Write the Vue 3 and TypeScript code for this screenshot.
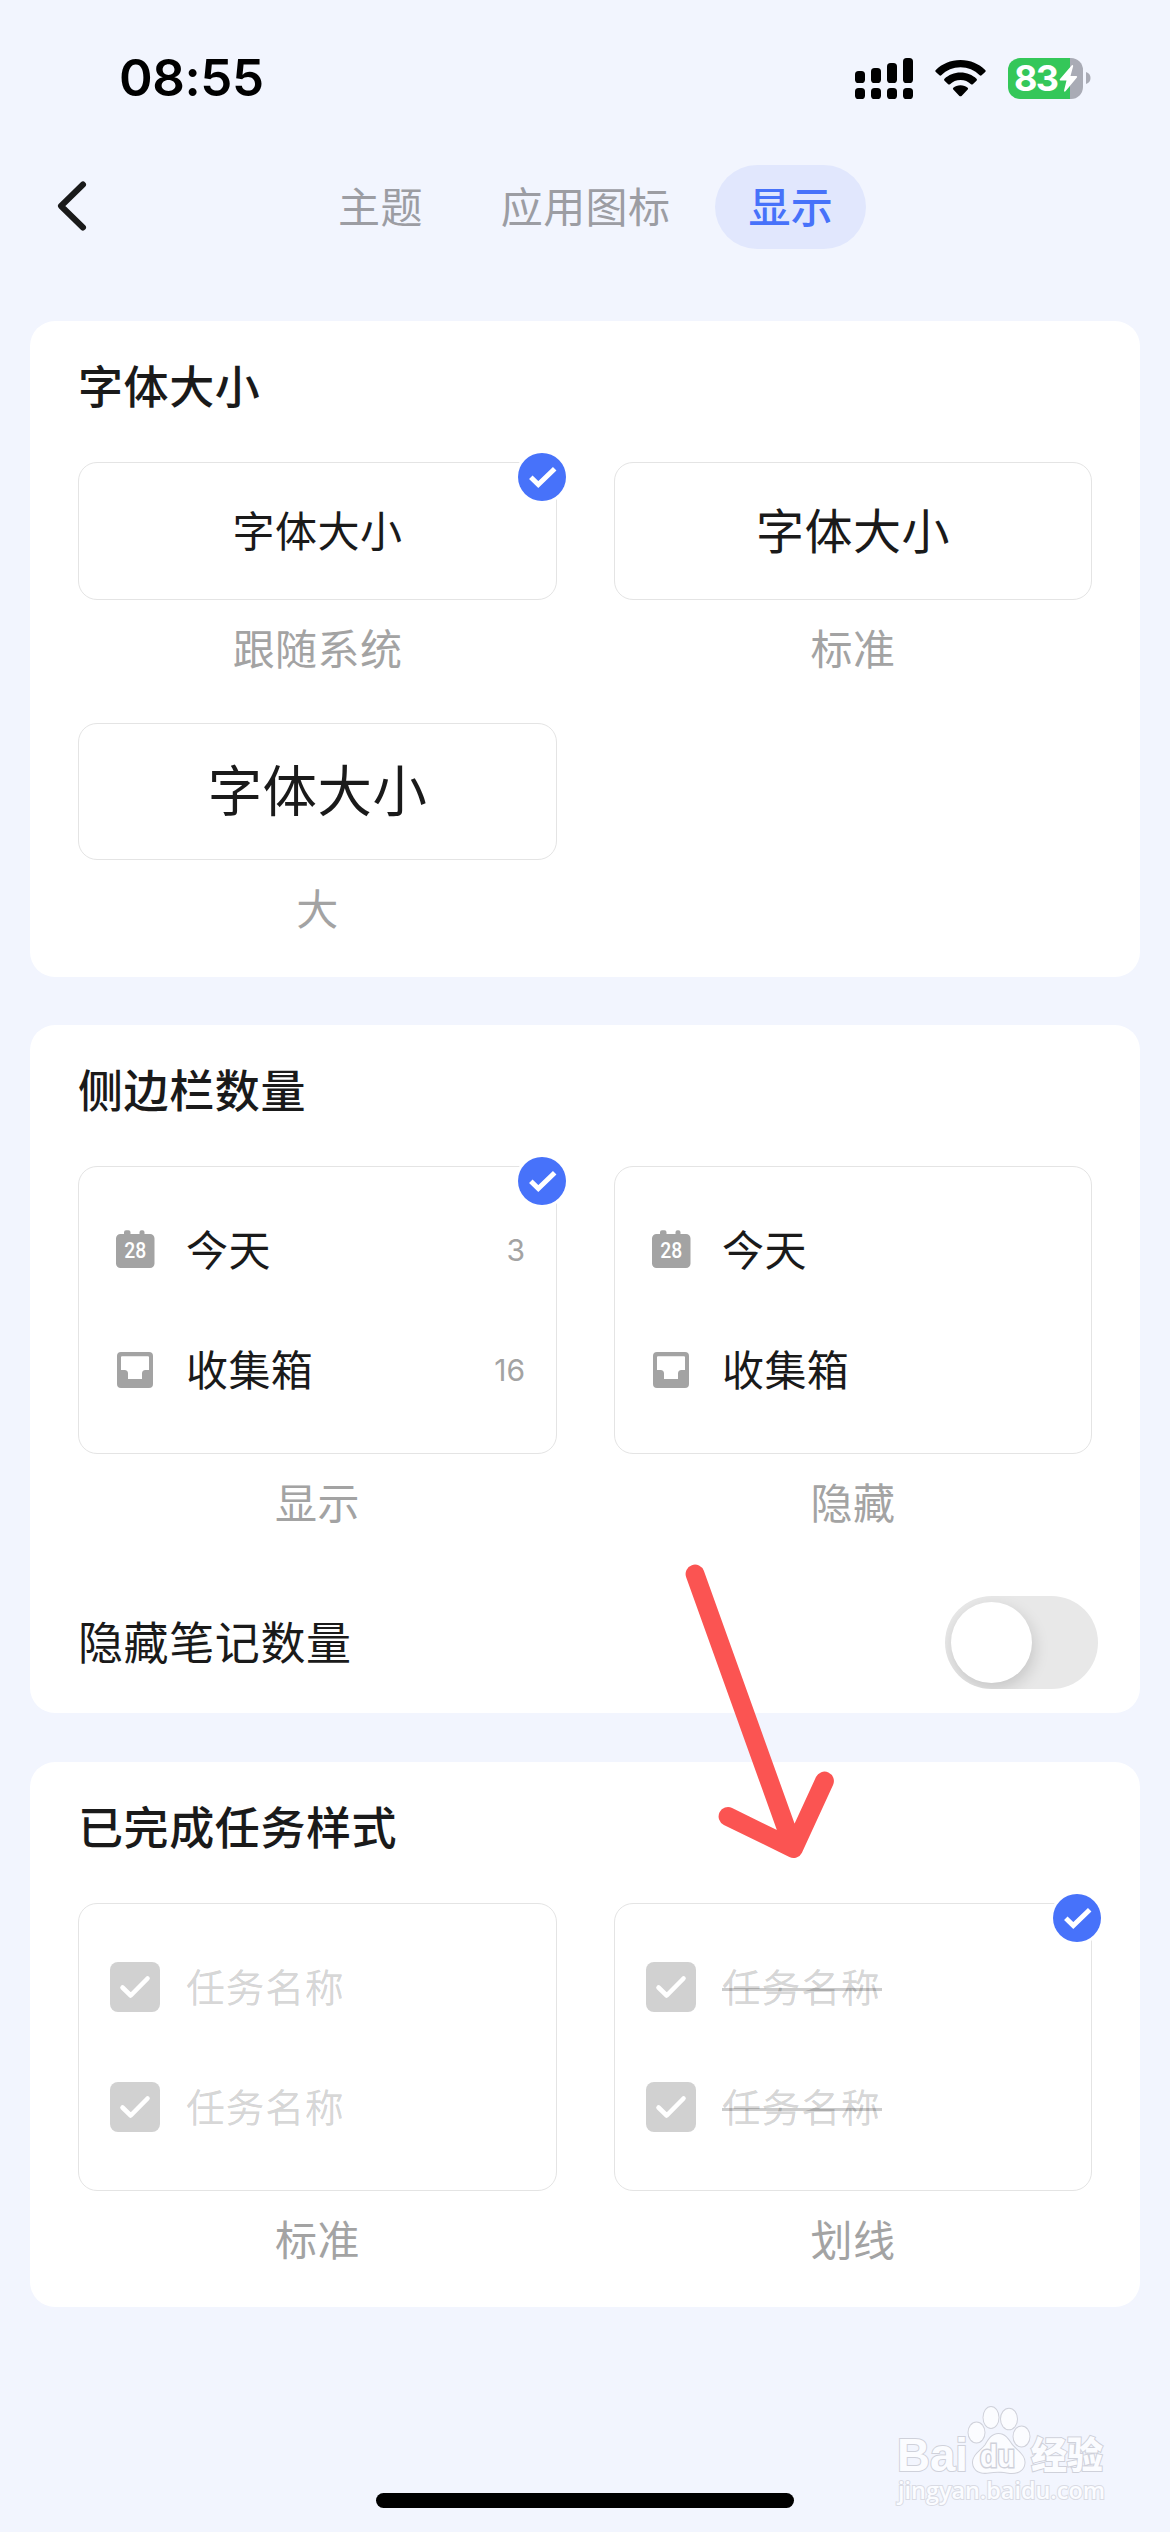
<script setup lang="ts">
interface SizeOption {
  label: string
  size: number
  selected: boolean
}

interface ListOption {
  label: string
  showCount: boolean
  selected: boolean
}

interface TaskOption {
  label: string
  struck: boolean
  selected: boolean
}

const tabs: { label: string; active: boolean }[] = [
  { label: '主题', active: false },
  { label: '应用图标', active: false },
  { label: '显示', active: true },
]

const sizes: SizeOption[] = [
  { label: '跟随系统', size: 42, selected: true },
  { label: '标准', size: 48, selected: false },
  { label: '大', size: 54.4, selected: false },
]

const lists: ListOption[] = [
  { label: '显示', showCount: true, selected: true },
  { label: '隐藏', showCount: false, selected: false },
]

const taskStyles: TaskOption[] = [
  { label: '标准', struck: false, selected: false },
  { label: '划线', struck: true, selected: true },
]

const tasks: string[] = ['任务名称', '任务名称']
const signalTops: number[] = [13, 10, 5, 0]
</script>

<template>
  <div class="screen">
    <header class="status">
      <span class="time">08:55</span>
      <div class="indicators">
        <svg class="signal" width="58" height="41" viewBox="0 0 58 41">
          <g v-for="(top, i) in signalTops" :key="i">
            <rect :x="i * 16" :y="top" width="10" :height="25 - top" rx="3.6" />
            <rect :x="i * 16" y="30" width="10" height="11" rx="3.6" />
          </g>
        </svg>
        <svg class="wifi" width="51" height="38" viewBox="0 0 51 38">
          <path d="M25.500 1C35.500 1 44 5 50.200 10.900Q51.200 11.900 50.200 12.900L46.600 16.300Q45.700 17.100 44.700 16.200C39.500 11.300 32.800 8.300 25.500 8.300S11.500 11.300 6.300 16.200Q5.300 17.100 4.400 16.300L.8 12.900Q-.2 11.900 .8 10.900C7 5 15.500 1 25.500 1Z" />
          <path d="M25.500 13.600C31.800 13.600 37.400 16 41.500 19.800Q42.500 20.800 41.500 21.800L37.800 25.200Q36.900 26 36 25.200C33.200 22.600 29.600 21 25.500 21S17.800 22.600 15 25.200Q14.100 26 13.200 25.200L9.500 21.800Q8.500 20.800 9.500 19.800C13.600 16 19.200 13.600 25.500 13.600Z" />
          <path d="M25.500 26.200C28.400 26.200 30.900 27.200 32.700 28.800Q33.600 29.700 32.700 30.600L26.600 36.900Q25.500 37.800 24.400 36.900L18.300 30.600Q17.400 29.700 18.300 28.800C20.100 27.200 22.600 26.200 25.500 26.200Z" />
        </svg>
        <div class="battery">
          <span class="level">83</span>
          <svg class="bolt" width="19" height="29" viewBox="0 0 19 29">
            <path d="M12.800 1.200L.8 15.200Q.2 16.400 1.500 16.500H7.500L5 26.800Q5.200 28.400 6.500 27.300L17.900 13.500Q18.700 12.200 17.300 12.100H11.500L14.200 2Q13.900 .3 12.800 1.200Z" fill="#fff" />
          </svg>
        </div>
        <svg class="cap" width="5" height="12" viewBox="0 0 5 12">
          <path d="M0 0C6 1.500 6 10.500 0 12Z" fill="#a9abb5" />
        </svg>
      </div>
    </header>

    <nav class="nav">
      <svg class="back" width="34" height="54" viewBox="0 0 34 54">
        <path d="M29 4.500L7 26L29 47.500" fill="none" stroke="#1a1a1a" stroke-width="6" stroke-linecap="round" stroke-linejoin="round" />
      </svg>
      <div class="tabs">
        <span v-for="tab in tabs" :key="tab.label" class="tab" :class="{ active: tab.active }">{{ tab.label }}</span>
      </div>
    </nav>

    <main class="cards">
      <section class="card">
        <h2 class="title">字体大小</h2>
        <div class="grid">
          <div v-for="opt in sizes" :key="opt.label" class="option">
            <div class="box sample">
              <span :style="{ fontSize: opt.size + 'px' }">字体大小</span>
              <svg v-if="opt.selected" class="badge" width="54" height="54" viewBox="-3 -3 54 54">
                <circle cx="24" cy="24" r="27" fill="#fff" />
                <circle cx="24" cy="24" r="24" fill="#4772fa" />
                <path d="M12.800 24.300L20.300 31.600L36.700 15.800" fill="none" stroke="#fff" stroke-width="5" />
              </svg>
            </div>
            <p class="caption">{{ opt.label }}</p>
          </div>
        </div>
      </section>

      <section class="card with-switch">
        <h2 class="title">侧边栏数量</h2>
        <div class="grid">
          <div v-for="opt in lists" :key="opt.label" class="option">
            <div class="box rows">
              <div class="row">
                <svg class="icon" width="50" height="50" viewBox="0 0 50 50">
                  <path d="M17.500 5.200h1a2 2 0 0 1 2 2V9h9V7.200a2 2 0 0 1 2-2h1a2 2 0 0 1 2 2V9H40a4.500 4.500 0 0 1 4.500 4.500v25A4.500 4.500 0 0 1 40 43H10.500A4.500 4.500 0 0 1 6 38.500v-25A4.500 4.500 0 0 1 10.500 9H14V7.200a2 2 0 0 1 2-2Z" fill="#a3a3a3" />
                  <text x="25.200" y="33" class="day" text-anchor="middle" textLength="22" lengthAdjust="spacingAndGlyphs">28</text>
                </svg>
                <span class="name">今天</span>
                <span v-if="opt.showCount" class="count">3</span>
              </div>
              <div class="row">
                <svg class="icon" width="50" height="50" viewBox="0 0 50 50">
                  <path fill-rule="evenodd" d="M11 7H39a4 4 0 0 1 4 4V39a4 4 0 0 1-4 4H11a4 4 0 0 1-4-4V11a4 4 0 0 1 4-4ZM11 12.300V25h3.500a3.500 3.500 0 0 1 3.500 3.500V34h14V28.500a3.500 3.500 0 0 1 3.500-3.500H39V12.300a1 1 0 0 0-1-1H12a1 1 0 0 0-1 1Z" fill="#a3a3a3" />
                </svg>
                <span class="name">收集箱</span>
                <span v-if="opt.showCount" class="count">16</span>
              </div>
              <svg v-if="opt.selected" class="badge" width="54" height="54" viewBox="-3 -3 54 54">
                <circle cx="24" cy="24" r="27" fill="#fff" />
                <circle cx="24" cy="24" r="24" fill="#4772fa" />
                <path d="M12.800 24.300L20.300 31.600L36.700 15.800" fill="none" stroke="#fff" stroke-width="5" />
              </svg>
            </div>
            <p class="caption">{{ opt.label }}</p>
          </div>
        </div>
        <div class="setting">
          <span class="setting-name">隐藏笔记数量</span>
          <span class="switch"><span class="knob"></span></span>
        </div>
      </section>

      <section class="card completed">
        <h2 class="title">已完成任务样式</h2>
        <div class="grid">
          <div v-for="opt in taskStyles" :key="opt.label" class="option">
            <div class="box rows">
              <div v-for="(task, i) in tasks" :key="i" class="row">
                <svg class="icon" width="50" height="50" viewBox="0 0 50 50">
                  <rect width="50" height="50" rx="8" fill="#d1d1d1" />
                  <path d="M12.500 25.500L20.700 33.500L37.500 16.500" fill="none" stroke="#fff" stroke-width="4.600" stroke-linecap="round" stroke-linejoin="round" />
                </svg>
                <span class="task" :class="{ struck: opt.struck }">{{ task }}</span>
              </div>
              <svg v-if="opt.selected" class="badge" width="54" height="54" viewBox="-3 -3 54 54">
                <circle cx="24" cy="24" r="27" fill="#fff" />
                <circle cx="24" cy="24" r="24" fill="#4772fa" />
                <path d="M12.800 24.300L20.300 31.600L36.700 15.800" fill="none" stroke="#fff" stroke-width="5" />
              </svg>
            </div>
            <p class="caption">{{ opt.label }}</p>
          </div>
        </div>
      </section>
    </main>

    <svg class="arrow" width="160" height="310" viewBox="680 1555 160 310">
      <path d="M695 1574L793.500 1848.500M728 1816.500L793.500 1848.500L824.500 1781" fill="none" stroke="#fb5452" stroke-width="18.800" stroke-linecap="round" stroke-linejoin="round" />
    </svg>

    <svg class="watermark" width="285" height="132" viewBox="885 2400 285 132">
      <g class="mark">
        <text x="897" y="2471" class="brand" textLength="71" lengthAdjust="spacingAndGlyphs">Bai</text>
        <ellipse cx="976.500" cy="2432.500" rx="8" ry="10" />
        <ellipse cx="991" cy="2417.500" rx="7.500" ry="10.500" />
        <ellipse cx="1009" cy="2419" rx="8" ry="10.300" />
        <ellipse cx="1021.500" cy="2436.500" rx="8" ry="10" />
        <path d="M998.500 2434C1005 2434 1008 2439 1012 2445C1017 2451 1025 2455 1024.500 2463C1024 2471 1017 2473.500 1010 2473C1002 2471.500 996 2471.500 989 2472.500C981 2474 973.500 2471 973 2463C972.500 2455 981 2451 985.500 2445C989 2439 992 2434 998.500 2434Z" />
        <text x="980" y="2467" class="du" textLength="35" lengthAdjust="spacingAndGlyphs">du</text>
        <text x="1031" y="2469" class="cn" textLength="72" lengthAdjust="spacingAndGlyphs">经验</text>
        <text x="898" y="2499" class="site" textLength="207" lengthAdjust="spacingAndGlyphs">jingyan.baidu.com</text>
      </g>
    </svg>

    <div class="home"></div>
  </div>
</template>

<style>
body {
  margin: 0;
  background: #f2f5fe;
}
</style>

<style scoped>
.screen {
  position: relative;
  box-sizing: border-box;
  width: 1170px;
  height: 2532px;
  overflow: hidden;
  background: #f2f5fe;
  color: #1a1a1a;
  font-family: 'Noto Sans CJK SC', 'Noto Sans', sans-serif;
}

.status {
  display: flex;
  align-items: center;
  justify-content: space-between;
  height: 156px;
  padding: 0 79px 0 119px;
}

.time {
  color: #000;
  font-family: Inter, sans-serif;
  font-size: 51px;
  font-weight: 600;
  letter-spacing: -0.4px;
  line-height: 60px;
}

.indicators {
  display: flex;
  align-items: center;
}

.wifi {
  margin-left: 22px;
}

.battery {
  display: flex;
  align-items: center;
  box-sizing: border-box;
  width: 75px;
  height: 41px;
  margin-left: 22px;
  padding-left: 6px;
  border-radius: 12px;
  background: linear-gradient(to right, #34c759 62px, #a9abb5 62px);
}

.level {
  width: 45px;
  color: #fff;
  font-family: Inter, sans-serif;
  font-size: 36px;
  font-weight: 700;
  letter-spacing: -1.8px;
  line-height: 41px;
}

.bolt {
  flex: none;
}

.cap {
  margin-left: 3px;
}

.nav {
  display: flex;
  align-items: center;
  height: 102px;
  padding-left: 54px;
}

.back {
  flex: none;
  margin-right: 217px;
}

.tabs {
  display: flex;
  gap: 12px;
}

.tab {
  box-sizing: border-box;
  height: 84px;
  padding: 0 33px;
  border-radius: 42px;
  color: #9c9da3;
  font-size: 42px;
  letter-spacing: 0.4px;
  line-height: 80px;
}

.tab.active {
  background: #e1e7fd;
  color: #4772fa;
  font-weight: 500;
}

.cards {
  display: flex;
  flex-direction: column;
  gap: 48px;
  padding: 63px 30px 0;
}

.card {
  padding: 36px 48px 38px;
  border-radius: 25px;
  background: #fff;
}

.card.with-switch {
  padding-bottom: 0;
}

.card.completed {
  margin-top: 1px;
  padding-bottom: 37px;
}

.title {
  height: 60px;
  margin: 0 0 45px;
  font-size: 45px;
  font-weight: 500;
  letter-spacing: 0.6px;
  line-height: 56px;
}

.grid {
  display: grid;
  grid-template-columns: 479px 478px;
  gap: 44px 57px;
}

.box {
  position: relative;
  box-sizing: border-box;
  border: 1px solid #e4e4e4;
  border-radius: 19px;
}

.sample {
  display: flex;
  align-items: center;
  justify-content: center;
  height: 138px;
  padding-bottom: 6px;
  letter-spacing: 0.5px;
}

.option:nth-child(3) .sample {
  height: 137px;
  padding-bottom: 8px;
}

.rows {
  height: 288px;
  padding: 23px 31px;
}

.badge {
  position: absolute;
  top: -13px;
  right: -13px;
}

.caption {
  height: 60px;
  margin: 19px 0 0;
  color: #a3a3a3;
  font-size: 42px;
  letter-spacing: 0.4px;
  line-height: 56px;
  text-align: center;
}

.row {
  display: flex;
  align-items: center;
  height: 120px;
}

.icon {
  flex: none;
  margin-right: 26px;
}

.day {
  fill: #fff;
  font-family: Roboto, sans-serif;
  font-size: 22px;
  font-weight: 500;
}

.name {
  padding-bottom: 4px;
  font-size: 42px;
  letter-spacing: 0.4px;
  line-height: 60px;
}

.count {
  margin-left: auto;
  color: #a3a3a3;
  font-family: Inter, sans-serif;
  font-size: 30px;
}

.task {
  position: relative;
  height: 60px;
  color: rgba(0, 0, 0, 0.18);
  font-size: 39px;
  letter-spacing: 0.6px;
  line-height: 57px;
}

.struck::after {
  content: '';
  position: absolute;
  top: 31px;
  left: 0;
  right: -2px;
  height: 3px;
  background: rgba(0, 0, 0, 0.2);
}

.setting {
  display: flex;
  align-items: center;
  justify-content: space-between;
  height: 141px;
  margin: 39px -6px 0 0;
}

.setting-name {
  padding-bottom: 3px;
  font-size: 45px;
  letter-spacing: 0.6px;
  line-height: 60px;
}

.switch {
  display: flex;
  box-sizing: border-box;
  width: 153px;
  height: 93px;
  padding: 6px;
  overflow: hidden;
  border-radius: 47px;
  background: #e8e8e8;
}

.knob {
  width: 81px;
  height: 81px;
  border-radius: 50%;
  background: #fff;
  box-shadow: 2px 6px 16px rgba(0, 0, 0, 0.15);
}

.arrow {
  position: absolute;
  top: 1555px;
  left: 680px;
}

.watermark {
  position: absolute;
  top: 2400px;
  left: 885px;
}

.mark {
  fill: #fbfcff;
  stroke: #cfd1da;
  stroke-width: 2px;
  paint-order: stroke;
}

.brand {
  font-family: 'Liberation Sans', Arial, sans-serif;
  font-size: 47px;
  font-weight: 700;
}

.du {
  font-family: 'Liberation Sans', Arial, sans-serif;
  font-size: 31px;
  font-weight: 700;
  stroke-width: 3px;
}

.cn {
  font-family: 'Noto Sans CJK SC', sans-serif;
  font-size: 37px;
  font-weight: 900;
}

.site {
  font-family: 'Open Sans', 'Noto Sans', sans-serif;
  font-size: 23.500px;
  font-weight: 600;
  stroke: #d9dbe4;
}

.home {
  position: absolute;
  bottom: 24px;
  left: 376px;
  width: 418px;
  height: 15px;
  border-radius: 8px;
  background: #000;
}
</style>
